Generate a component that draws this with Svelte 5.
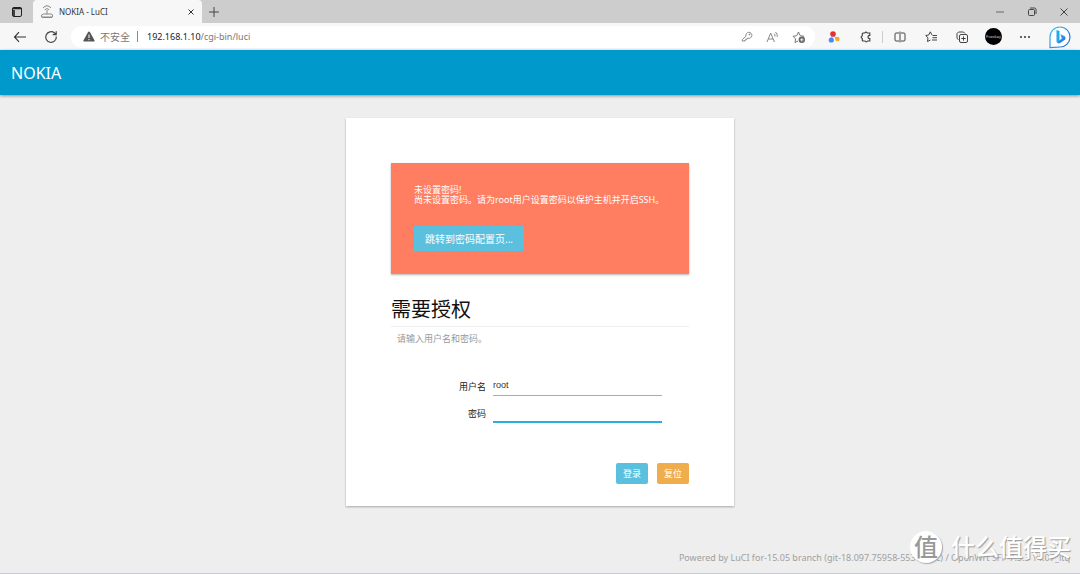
<script lang="ts">
  let username = $state("root");
  let password = $state("");

  function reset() {
    username = "root";
    password = "";
  }
</script>

<div class="window">
  <div class="tabs">
    <button class="icon workspaces" aria-label="标签页操作">
      <svg width="12" height="12" viewBox="0 0 12 12" fill="none" stroke="#222">
        <rect x="1.5" y="1.5" width="9" height="9" rx="1.5" />
        <path d="M1.5 2.5h9M3 4v6.5" stroke-width="1.600" />
      </svg>
    </button>
    <div class="tab">
      <svg width="14" height="14" viewBox="0 0 14 14" fill="none" stroke="#888">
        <path d="M3 3Q7-1.500 11 3M4.800 4.800q2.200-2.500 4.400 0M7 5v4" />
        <path d="M3.500 9h8l1 1v2h-11v-2zM2 12.500h10" />
      </svg>
      <span class="tab-title">NOKIA - LuCI</span>
      <button class="icon" aria-label="关闭标签页">
        <svg width="8" height="8" viewBox="0 0 8 8" stroke="#333">
          <path d="M1.500 1.500l5 5M6.500 1.500l-5 5" />
        </svg>
      </button>
    </div>
    <button class="icon new-tab" aria-label="新建标签页">
      <svg width="12" height="12" viewBox="0 0 12 12" stroke="#444">
        <path d="M6 1v10M1 6h10" />
      </svg>
    </button>
    <div class="controls">
      <button class="icon" aria-label="最小化">
        <svg width="10" height="10" viewBox="0 0 10 10" stroke="#666"><path d="M1 5h8" /></svg>
      </button>
      <button class="icon" aria-label="还原">
        <svg width="10" height="10" viewBox="0 0 10 10" fill="none" stroke="#444">
          <rect x="1.500" y="2.500" width="6" height="6" rx="1" />
          <path d="M3 1h4.500Q9 1 9 2.500V7" />
        </svg>
      </button>
      <button class="icon" aria-label="关闭">
        <svg width="10" height="10" viewBox="0 0 10 10" stroke="#444">
          <path d="M1.500 1.500l7 7M8.500 1.500l-7 7" />
        </svg>
      </button>
    </div>
  </div>

  <div class="toolbar">
    <button class="icon back" aria-label="后退">
      <svg width="14" height="12" viewBox="0 0 14 12" fill="none" stroke="#333" stroke-width="1.100">
        <path d="M13 6H1.500M6 1.200L1.500 6 6 10.800" />
      </svg>
    </button>
    <button class="icon reload" aria-label="刷新">
      <svg width="14" height="14" viewBox="0 0 14 14" fill="none" stroke="#444" stroke-width="1.200">
        <path d="M12.300 6.500A5.300 5.300 0 1 1 10.500 3L12 4.500M12.200 1.200v3.500H8.700" />
      </svg>
    </button>
    <div class="address">
      <svg width="12" height="11" viewBox="0 0 12 11">
        <path d="M6 .4q.6 0 .9.600l4.700 8.600q.4.900-.6.900H1q-1 0-.6-.900L5.100 1Q5.400.4 6 .4z" fill="#555" />
        <path d="M6 3.500v3.500M6 8v1.200" stroke="#fff" />
      </svg>
      <span class="insecure">不安全</span>
      <span class="bar"></span>
      <span class="url">192.168.1.10<span>/cgi-bin/luci</span></span>
      <div class="address-icons">
        <button class="icon" aria-label="保存的密码">
          <svg width="12" height="12" viewBox="0 0 12 12" fill="none" stroke="#888">
            <path d="M5 5.200a3 3 0 1 1 2 2L6 8H5v1H4v1H1.300V8.700z" />
            <circle cx="8.500" cy="3.500" r=".5" />
          </svg>
        </button>
        <button class="icon" aria-label="朗读此页内容">
          <svg width="13" height="12" viewBox="0 0 13 12" fill="none" stroke="#888">
            <path d="M1 11L4.700 2l3.700 9M2.300 8h4.900M8 2.500q1.300 1 1 3M9.500 1q2.200 1.800 1.800 4.800" />
          </svg>
        </button>
        <button class="icon" aria-label="添加到收藏夹">
          <svg width="14" height="14" viewBox="0 0 14 14" fill="none" stroke="#777">
            <path d="M6 11L3 12.500l.6-3.600L1 6.300l3.700-.6L6.500 2l1.700 3.700 4 .6" />
            <circle cx="9.800" cy="9.800" r="3.200" fill="#666" stroke="none" />
            <path d="M9.800 8v3.600M8 9.800h3.600" stroke="#fff" stroke-width=".8" />
          </svg>
        </button>
      </div>
    </div>
    <div class="extensions">
      <button class="icon" aria-label="扩展">
        <svg width="12" height="12" viewBox="0 0 12 12">
          <path d="M5 3L3 9M5 4l4 4" stroke="#999" />
          <circle cx="5" cy="3" r="2.800" fill="#e72f2f" />
          <circle cx="3.300" cy="9" r="2.600" fill="#3f8df5" />
          <circle cx="9.400" cy="8" r="2.200" fill="#f4a62a" />
        </svg>
      </button>
      <button class="icon" aria-label="管理扩展">
        <svg width="12" height="12" viewBox="0 0 12 12" fill="none" stroke="#444" stroke-width="1.200">
          <path d="M3.500 2h1.200q1.300-1.800 2.600 0h2.500v2.300Q8 4.300 8 6t1.800 1.700V10H7.500q-1.300 1.800-2.600 0H3.300q-1 0-1-1V7.500Q0 6 2.300 4.700V3q0-1 1.200-1z" />
        </svg>
      </button>
    </div>
    <span class="divider"></span>
    <div class="actions">
      <button class="icon" aria-label="拆分屏幕">
        <svg width="12" height="12" viewBox="0 0 12 12" fill="none" stroke="#444">
          <path d="M5 2H2Q1 2 1 3v6q0 1 1 1h3M7 2h3q1 0 1 1v6q0 1-1 1H7M6 .5v11" />
        </svg>
      </button>
      <button class="icon" aria-label="收藏夹">
        <svg width="12" height="12" viewBox="0 0 12 12" fill="none" stroke="#444">
          <path d="M7 4L5.300.8 3.700 4 .7 4.500 3 6.800 2.500 10.500 5.500 9M7.500 4.500H12M7.500 6.700H12M7 9h5" />
        </svg>
      </button>
      <button class="icon" aria-label="集锦">
        <svg width="12" height="12" viewBox="0 0 12 12" fill="none" stroke="#444">
          <path d="M2.500 8.500L1 7.500v-5L2.500 1h5l1.500 1.500" />
          <rect x="3.500" y="3.500" width="8" height="8" rx="1.500" />
          <path d="M7.500 5.300v4.400M5.300 7.500h4.400" />
        </svg>
      </button>
      <button class="icon avatar" aria-label="个人资料">Foxskay</button>
      <button class="icon" aria-label="设置及其他">
        <svg width="12" height="12" viewBox="0 0 12 12" fill="#333">
          <circle cx="2" cy="6" r="1" /><circle cx="6" cy="6" r="1" /><circle cx="10" cy="6" r="1" />
        </svg>
      </button>
    </div>
    <button class="icon bing" aria-label="必应">
      <svg width="24" height="24" viewBox="0 0 24 24" fill="none">
        <defs>
          <linearGradient id="bing" x1="0" y1="0" x2="1" y2="1">
            <stop offset="0" stop-color="#35c3f0" />
            <stop offset="1" stop-color="#2861d8" />
          </linearGradient>
        </defs>
        <path d="M2 22.500V12A10 10 0 1 1 12 22z" fill="#fff" stroke="url(#bing)" stroke-width="1.200" />
        <path d="M8.500 5l3 1v9.500L8.500 17z" fill="#22a8ee" />
        <path d="M12.300 9l4.400 2.300q1.500 1.200.5 3.300l-5 3.500q-2 1-3.700-1.100l5.300-3.300z" fill="url(#bing)" />
      </svg>
    </button>
  </div>

  <header><a href="/">NOKIA</a></header>

  <main>
    <section class="card">
      <div class="alert">
        <h4>未设置密码!</h4>
        <p>尚未设置密码。请为root用户设置密码以保护主机并开启SSH。</p>
        <button class="jump">跳转到密码配置页...</button>
      </div>
      <form onsubmit={(e) => e.preventDefault()}>
        <h2>需要授权</h2>
        <p class="description">请输入用户名和密码。</p>
        <div class="fields">
          <label for="username">用户名</label>
          <input id="username" type="text" bind:value={username} />
          <label for="password">密码</label>
          <input id="password" class="active" type="password" bind:value={password} />
        </div>
        <div class="buttons">
          <button class="login" type="submit">登录</button>
          <button class="reset" type="button" onclick={reset}>复位</button>
        </div>
      </form>
    </section>
    <footer>Powered by LuCI for-15.05 branch (git-18.097.75958-5537ea1c) / OpenWrt SFP 7.5.3 14.07_ltq</footer>
    <div class="watermark">
      <span class="seal">值</span>
      <span>什么值得买</span>
    </div>
  </main>
</div>

<style>
  .window {
    min-height: 100vh;
    display: flex;
    flex-direction: column;
    box-sizing: border-box;
    background: #eee;
    border-bottom: 1px solid #c8cbd0;
    font-family: "Noto Sans", "Noto Sans CJK SC", sans-serif;
    font-size: 9px;
    color: #333;
  }

  button,
  input {
    font: inherit;
    box-sizing: border-box;
  }

  button {
    border: 0;
    padding: 0;
    cursor: pointer;
  }

  .icon {
    display: flex;
    align-items: center;
    justify-content: center;
    flex-shrink: 0;
    background: none;
  }

  .tabs {
    display: flex;
    align-items: center;
    height: 23px;
    background: #cdcdcd;
  }

  .workspaces {
    width: 33px;
  }

  .tab {
    display: flex;
    align-items: center;
    gap: 5px;
    width: 169px;
    height: 23px;
    padding: 0 7px;
    box-sizing: border-box;
    background: #f7f7f7;
    border-radius: 4px 4px 0 0;
  }

  .tab-title {
    flex: 1;
    font-size: 8px;
  }

  .new-tab {
    width: 24px;
  }

  .controls {
    display: flex;
    gap: 22px;
    margin-left: auto;
    padding-right: 11px;
  }

  .toolbar {
    display: flex;
    align-items: center;
    height: 27px;
    padding: 0 8px 0 13px;
    background: #f7f7f7;
  }

  .reload {
    margin: 0 13px 0 17px;
  }

  .address {
    display: flex;
    align-items: center;
    flex: 1;
    height: 22px;
    padding: 0 9px 0 12px;
    border-radius: 11px;
    background: #fff;
    font-size: 10px;
  }

  .insecure {
    margin-left: 5px;
    color: #777;
  }

  .bar {
    width: 1px;
    height: 11px;
    margin: 0 9px 0 7px;
    background: #888;
  }

  .url {
    color: #222;
    font-size: 9px;
  }

  .url span {
    color: #777;
  }

  .address-icons {
    display: flex;
    gap: 13px;
    margin-left: auto;
  }

  .extensions {
    display: flex;
    gap: 20px;
    padding: 0 10px 0 13px;
  }

  .divider {
    width: 1px;
    height: 12px;
    background: #ccc;
  }

  .actions {
    display: flex;
    align-items: center;
    gap: 19px;
    padding: 0 17px 0 11px;
  }

  .avatar {
    width: 17px;
    height: 17px;
    margin: 0 -2px;
    border-radius: 50%;
    background: #000;
    color: #ddd;
    font-size: 4px;
  }

  header {
    position: relative;
    display: flex;
    align-items: center;
    height: 45px;
    padding: 0 11px;
    background: #0099cc;
    box-shadow: 0 1px 3px rgba(0, 0, 0, 0.4);
  }

  header a {
    color: #fff;
    font-size: 16px;
    text-decoration: none;
  }

  main {
    position: relative;
    display: flex;
    flex-direction: column;
    flex: 1;
    padding: 23px 10px 7px;
  }

  .card {
    width: 100%;
    max-width: 388px;
    margin: 0 auto;
    padding: 45px 45px 22px;
    box-sizing: border-box;
    background: #fff;
    box-shadow: 0 1px 2px rgba(0, 0, 0, 0.3);
  }

  .alert {
    padding: 22px 23px 23px;
    background: #ff7d60;
    box-shadow: 0 1px 2px rgba(0, 0, 0, 0.3);
    color: #fff;
    line-height: 10px;
  }

  h4,
  p {
    margin: 0;
    font-size: 9px;
    font-weight: 400;
  }

  .jump {
    height: 25px;
    margin-top: 21px;
    padding: 0 11px;
    background: #5bc0de;
    color: #fff;
    font-size: 10px;
  }

  h2 {
    margin: 22px 0 0;
    padding-bottom: 2px;
    border-bottom: 1px solid #eee;
    color: #111;
    font-size: 20px;
    line-height: 28px;
    font-weight: 400;
  }

  .description {
    padding: 6px;
    color: #999;
    line-height: 12px;
  }

  .fields {
    display: grid;
    grid-template-columns: 95px 1fr;
    gap: 7px;
    align-items: center;
    padding: 25px 27px 40px 0;
  }

  .fields label {
    padding-top: 2px;
    text-align: right;
    color: #222;
    line-height: 18px;
  }

  .fields input {
    width: 100%;
    height: 20px;
    padding: 0 0 2px;
    border: 0;
    border-bottom: 1px solid #aaa;
    outline: none;
    background: none;
    color: #333;
    font-family: "Liberation Sans", sans-serif;
  }

  .fields .active {
    border-bottom: 2px solid #2aaedb;
  }

  .buttons {
    display: flex;
    justify-content: flex-end;
    gap: 9px;
  }

  .buttons button {
    width: 32px;
    height: 21px;
    border-radius: 2px;
    color: #fff;
  }

  .buttons .login {
    background: #5bc0de;
  }

  .buttons .reset {
    background: #f0ad4e;
  }

  footer {
    margin-top: auto;
    color: #a0a0a0;
    text-align: right;
    line-height: 16px;
  }

  /* sits over the footer text */
  .watermark {
    position: absolute;
    right: 9px;
    bottom: 10px;
    display: flex;
    align-items: center;
    gap: 9px;
    color: #fff;
    font-size: 24px;
    font-weight: 500;
    line-height: 32px;
    text-shadow: 1px 1px 1px #999;
  }

  .seal {
    width: 32px;
    height: 32px;
    border-radius: 50%;
    background: #fff;
    box-shadow: 1px 1px 1px #aaa;
    color: #999;
    text-align: center;
    text-shadow: none;
  }
</style>
